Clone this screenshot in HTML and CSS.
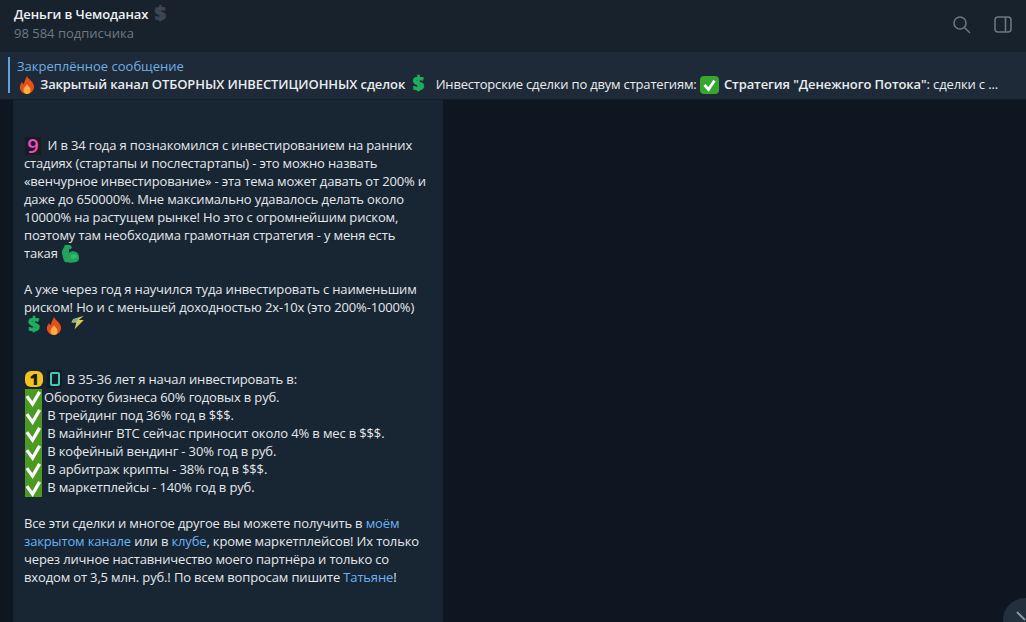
FILE: index.html
```html
<!DOCTYPE html>
<html lang="ru">

<head>
  <meta charset="UTF-8" />
  <meta name="viewport" content="width=device-width, initial-scale=1.0" />
  <title>Деньги в Чемоданах</title>
  <link rel="stylesheet" href="styles.css">
</head>

<body>
  <svg class="defs" width="0" height="0">
    <symbol id="check" viewBox="0 0 18 18">
      <path d="M2 7 L8 15.500 L15.500 2.500" fill="none" stroke="#fff" stroke-width="3.400" />
    </symbol>
    <symbol id="check-big" viewBox="0 0 18 18">
      <path d="M4 9 L8 13.500 L14 4.500" fill="none" stroke="#fff" stroke-width="2.800" />
    </symbol>
    <symbol id="fire" viewBox="0 0 18 18">
      <path d="M9 0c1 3 6 5 7 10 .6 4-3 8-7 8s-8-3.500-7-8c.4-2 1.500-3 2-4 .5 1 1 2 2 2 0-3 2-5 3-8z" fill="#e4501c" />
      <path d="M9 8c.5 2 3.500 3 3.500 6S10.800 18 9 18s-3.500-1.200-3.500-4S8.500 10 9 8z" fill="#f9b13c" />
    </symbol>
    <symbol id="muscle" viewBox="0 0 18 18">
      <path d="M3 0h5l2 2-1 2-2 0 0 4c2-2 5-2 7-1 3 1 4 7 2 9-2 2-10 2-13 1-2-2-3-8-3-11z" fill="#22a45f" />
      <path d="M9 10c2-1 5-1 6 1-1 3-5 3-6 2z" fill="#2cbd70" />
    </symbol>
    <symbol id="bolt" viewBox="0 0 18 18">
      <path d="M3 5l13-4-6 5 6 0-11 11 2-8-6 0z" fill="#d9c95a" />
      <path d="M3 5l7-2-3 6-4 0z" fill="#7fb5a0" />
    </symbol>
  </svg>

  <div class="app">
    <header class="top-bar">
      <div class="channel">
        <div class="channel-name">Деньги в Чемоданах <span class="dollar-grey">$</span></div>
        <div class="channel-subs">98 584 подписчика</div>
      </div>
      <div class="top-icons">
        <svg class="icon" viewBox="0 0 20 20">
          <circle cx="8" cy="8" r="6" />
          <path d="M12.500 12.500 L18 18" />
        </svg>
        <svg class="icon" viewBox="0 0 20 20">
          <rect x="2" y="2" width="16" height="15" rx="3" />
          <path d="M12.500 2 V17" />
        </svg>
      </div>
    </header>

    <div class="pinned">
      <div class="pinned-line"></div>
      <div class="pinned-body">
        <div class="pinned-title">Закреплённое сообщение</div>
        <div class="pinned-text"><svg class="emoji"><use href="#fire" /></svg> <span class="strong">Закрытый канал ОТБОРНЫХ ИНВЕСТИЦИОННЫХ сделок</span> <span class="dollar-green">$</span> <span class="gap">Инвесторские сделки по двум стратегиям:</span> <span class="check-box big-box"><svg><use href="#check-big" /></svg></span> <span class="strong">Стратегия "Денежного Потока"</span>: сделки с ...</div>
      </div>
    </div>

    <main class="chat">
      <article class="bubble">
        <p><span class="nine">9</span>&nbsp; И в 34 года я познакомился с инвестированием на ранних стадиях (стартапы и послестартапы) - это можно назвать «венчурное инвестирование» - эта тема может давать от 200% и даже до 650000%. Мне максимально удавалось делать около 10000% на растущем рынке! Но это с огромнейшим риском, поэтому там необходима грамотная стратегия - у меня есть такая <svg class="emoji"><use href="#muscle" /></svg></p>

        <p>А уже через год я научился туда инвестировать с наименьшим риском! Но и с меньшей доходностью 2х-10х (это 200%-1000%)<br>
          <span class="dollar-green">$</span> <svg class="emoji"><use href="#fire" /></svg> <svg class="emoji bolt"><use href="#bolt" /></svg></p>

        <p class="after-gap"><span class="num-one">1</span> <span class="num-zero"><span class="num-zero-ring"></span></span>&nbsp; В 35-36 лет я начал инвестировать в:<br>
          <span class="check-box"><svg><use href="#check" /></svg></span>Оборотку бизнеса 60% годовых в руб.<br>
          <span class="check-box"><svg><use href="#check" /></svg></span>&nbsp;В трейдинг под 36% год в $$$.<br>
          <span class="check-box"><svg><use href="#check" /></svg></span>&nbsp;В майнинг BTC сейчас приносит около 4% в мес в $$$.<br>
          <span class="check-box"><svg><use href="#check" /></svg></span>&nbsp;В кофейный вендинг - 30% год в руб.<br>
          <span class="check-box"><svg><use href="#check" /></svg></span>&nbsp;В арбитраж крипты - 38% год в $$$.<br>
          <span class="check-box"><svg><use href="#check" /></svg></span>&nbsp;В маркетплейсы - 140% год в руб.</p>

        <p>Все эти сделки и многое другое вы можете получить в <a href="#">моём</a> <a href="#">закрытом канале</a> или в <a href="#">клубе</a>, кроме маркетплейсов! Их только через личное наставничество моего партнёра и только со входом от 3,5 млн. руб.! По всем вопросам пишите <a href="#">Татьяне</a>!</p>
      </article>
    </main>

    <button class="scroll-down" type="button">
      <svg viewBox="0 0 20 20"><path d="M2 2 L10 10" /></svg>
    </button>
  </div>
</body>

</html>
```

FILE: styles.css
```css
body {
  margin: 0;
  font-family: "Open Sans", sans-serif;
  font-size: 13px;
  line-height: 18px;
  letter-spacing: -0.15px;
  color: #e4e8eb;
  background-color: #0e1621;
  overflow: hidden;
}

.defs {
  display: none;
}

.app {
  height: 622px;
  display: flex;
  flex-direction: column;
  position: relative;
  overflow: hidden;
}

.top-bar {
  height: 52px;
  flex-shrink: 0;
  background-color: #18222d;
  display: flex;
  justify-content: space-between;
  padding: 4px 13px 0 14px;
  box-sizing: border-box;
}

.channel-name {
  font-weight: 600;
  color: #eef1f3;
  line-height: 20px;
  letter-spacing: -0.1px;
}

.dollar-grey {
  font-size: 20px;
  font-weight: 800;
  line-height: 12px;
  color: #3d4650;
  margin-left: 3px;
  vertical-align: -1px;
  -webkit-text-stroke: 0.6px #3d4650;
}

.channel-subs {
  color: #6d7883;
  letter-spacing: 0;
}

.top-icons {
  display: flex;
  gap: 21px;
  padding-top: 11px;
}

.icon {
  width: 20px;
  height: 20px;
  fill: none;
  stroke: #6b7580;
  stroke-width: 1.600;
}

.pinned {
  height: 48px;
  flex-shrink: 0;
  background-color: #1e2a37;
  display: flex;
  padding: 5px 0 0 8px;
  box-sizing: border-box;
  border-bottom: 1px solid #141d27;
}

.pinned-line {
  width: 2px;
  height: 36px;
  background-color: #5fa5dc;
}

.pinned-body {
  padding-left: 7px;
  flex: 1;
}

.pinned-title {
  color: #6cb0e6;
  line-height: 18px;
  letter-spacing: 0;
}

.pinned-text {
  height: 20px;
  line-height: 18px;
  white-space: nowrap;
  color: #e9edf0;
}

.strong {
  font-weight: 600;
  letter-spacing: -0.1px;
}

.gap {
  margin-left: 6px;
  letter-spacing: -0.19px;
}

.emoji {
  width: 18px;
  height: 18px;
  margin: -4px 2px -4px 0;
  vertical-align: -1px;
}

.pinned-text .emoji {
  margin-left: 1px;
  margin-right: 1px;
}

.bubble p > .emoji:last-child {
  margin-left: 1px;
}

.bubble p > .emoji.bolt {
  width: 16px;
  height: 15px;
  margin-left: 2px;
  vertical-align: 4px;
}

.dollar-green {
  display: inline-block;
  width: 16px;
  font-size: 20px;
  font-weight: 800;
  color: #1fae5d;
  line-height: 12px;
  text-align: center;
  vertical-align: -1px;
  margin-left: 2px;
  -webkit-text-stroke: 0.6px #1fae5d;
}

.check-box {
  display: inline-block;
  width: 17px;
  height: 18px;
  background-color: #4a9a23;
  vertical-align: -1px;
  margin: -4px 2px -4px 1px;
}

.check-box svg {
  display: block;
  width: 17px;
  height: 18px;
}

.big-box {
  width: 19px;
  border-radius: 4px;
  background-color: #37a52e;
  margin: -4px 2px -4px 0;
}

.big-box svg {
  width: 19px;
}

.nine {
  display: inline-block;
  width: 16px;
  height: 18px;
  background-color: #1c1a20;
  color: #ec4fc2;
  font-size: 20px;
  font-weight: 600;
  line-height: 17px;
  text-align: center;
  margin: -4px 0 -4px 1px;
  vertical-align: -3px;
}

.num-one {
  display: inline-block;
  width: 18px;
  height: 16px;
  background-color: #f2c21e;
  color: #1b1b10;
  border-radius: 6px;
  font-size: 16px;
  font-weight: 800;
  line-height: 16px;
  text-align: center;
  margin: -4px 0 -4px 1px;
  vertical-align: -1px;
}

.num-zero {
  display: inline-block;
  width: 15px;
  height: 18px;
  box-sizing: border-box;
  background-color: #0f1d22;
  padding: 2px 2.500px;
  margin: -4px -2px -4px 1px;
  vertical-align: 0;
}

.num-zero-ring {
  display: block;
  height: 100%;
  box-sizing: border-box;
  border: 2px solid #3cc8bd;
  border-radius: 2px;
}

.chat {
  flex: 1;
  padding-left: 13px;
  min-height: 0;
}

.bubble {
  width: 430px;
  height: 100%;
  box-sizing: border-box;
  background-color: #182533;
  padding: 36px 15px 0 11px;
}

.bubble p {
  margin: 0 0 18px 0;
}

.bubble p.after-gap {
  margin-top: 36px;
}

.bubble a {
  color: #6ab3f3;
  text-decoration: none;
}

.scroll-down {
  position: absolute;
  left: 1003px;
  top: 598px;
  width: 44px;
  height: 44px;
  border: none;
  border-radius: 50%;
  background-color: #222f3d;
  padding: 12px;
}

.scroll-down svg {
  display: block;
  width: 20px;
  height: 20px;
  fill: none;
  stroke: #8d98a3;
  stroke-width: 2;
}
```
